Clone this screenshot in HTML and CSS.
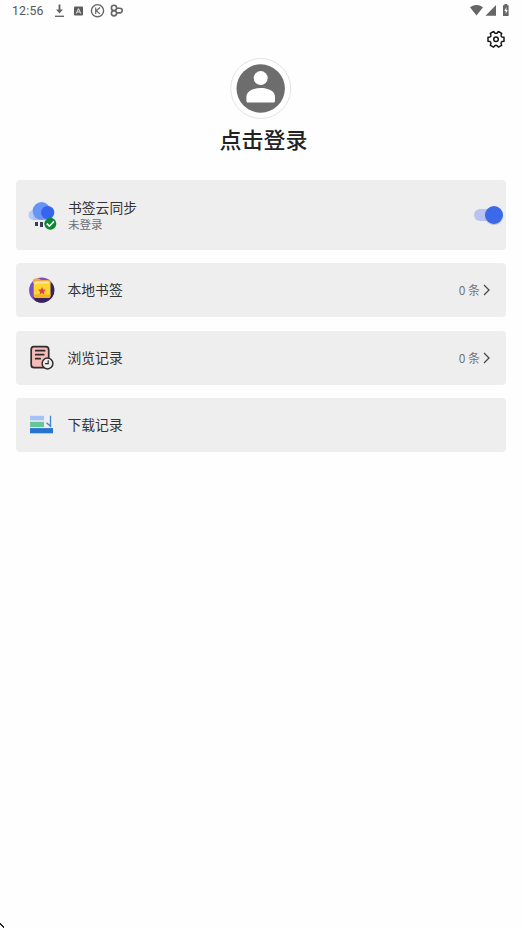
FILE: index.html
```html
<!DOCTYPE html>
<html lang="zh-CN">
<head>
<meta charset="utf-8">
<title>点击登录</title>
<link rel="stylesheet" href="styles.css">
</head>
<body>
<header class="status">
  <span class="clock">12:56</span>
  <svg class="left-icons" width="70" height="16" viewBox="54 3 70 16">
    <g fill="none" stroke="#666" stroke-width="1.4">
      <path d="M59.500 4.500v7" stroke-width="1.900"/><path d="M55 16.300h9"/>
      <circle cx="97.500" cy="10.700" r="6.100" stroke-width="1.400"/>
      <path d="M95.700 7.500v6.400M100 7.500l-3.700 3.200 3.700 3.200" stroke-width="1.200"/>
      <circle cx="114" cy="7.900" r="2.600" stroke-width="1.600"/><circle cx="114" cy="13.300" r="2.600" stroke-width="1.600"/>
      <path d="M116.500 8.300h3.400a2.300 2.300 0 0 1 0 4.600h-3.400" stroke-width="1.600"/>
    </g>
    <path d="M56 9.500h7l-3.500 4z" fill="#666"/>
    <rect x="74" y="6.500" width="9" height="9" rx="1" fill="#5c5c5c"/>
    <path d="M76.200 13.600l2.300-5 2.300 5M77.200 12h2.600" stroke="#eee" fill="none"/>
  </svg>
  <svg class="right-icons" width="42" height="16" viewBox="469 3 42 16">
    <g fill="#666"><path d="M470 7.200q6.500-4.400 13 0l-6.500 8.300zM485.500 15.700l10.500-10.700v10.700z"/>
    <path d="M503 5.300h1.400V4h2.800v1.300h1.400V16H503z"/></g>
    <path d="M506.500 7l-2.200 4h1.400v3l2-4h-1.400z" fill="#fff"/>
  </svg>
</header>
<div class="toolbar">
  <svg width="20" height="20" viewBox="-10 -10.300 20 20" fill="none" stroke="#161616" stroke-width="1.500" stroke-linejoin="round">
    <path d="M8-2V2Q3.600 1.900 5.700 6L2.400 7.800Q0 3.900-2.400 7.800L-5.700 6Q-3.600 1.900-8 2V-2Q-3.600-1.900-5.700-6L-2.400-7.800Q0-3.900 2.400-7.800L5.700-6Q3.600-1.900 8-2Z"/>
    <circle r="2.300"/>
  </svg>
</div>
<section class="profile">
  <svg width="62" height="62" viewBox="-30.700 -31.500 62 62">
    <circle r="30" fill="#fff" stroke="#e3e3e3"/>
    <circle r="24.200" fill="#6d6d6d"/>
    <circle cy="-10.400" r="7" fill="#fff"/>
    <path d="M-14.300 12.500V8.500C-14.300 2-6.500-.5 0-.5S14.300 2 14.300 8.500v4q0 1.500-1.500 1.500h-25.600q-1.500 0-1.500-1.500z" fill="#fff"/>
  </svg>
  <h1>点击登录</h1>
</section>
<main class="cards">
  <div class="card sync">
    <svg class="icon" width="30" height="30" viewBox="27 201 30 30">
      <circle cx="33.500" cy="215" r="5" fill="#b5cbfb"/><path d="M33 214h13v6H33z" fill="#a6c0fa"/>
      <circle cx="41.500" cy="211" r="8.900" fill="#6795f5"/>
      <circle cx="47.700" cy="212.500" r="6.600" fill="#3565ee"/>
      <path d="M35 222h3v4h-3zM40 222h3v5h-3z" fill="#3b3c59"/>
      <circle cx="50.300" cy="223.700" r="6" fill="#0a8931"/>
      <path d="M46.800 223.700l2.600 2.500 4.500-4.800" fill="none" stroke="#fff" stroke-width="1.600"/>
    </svg>
    <div class="text"><span class="label">书签云同步</span><span class="sub">未登录</span></div>
    <span class="switch"><i></i></span>
  </div>
  <div class="card">
    <svg class="icon" width="30" height="30" viewBox="26.500 275.100 30 30">
      <defs><clipPath id="disc"><circle cx="41.200" cy="290.300" r="12.600"/></clipPath></defs>
      <g clip-path="url(#disc)"><path d="M28 277h27v27H28z" fill="#7650c5"/>
      <path d="M33 297l17-15 6 5v18H36z" fill="#38225f"/></g>
      <path d="M32.500 283v-2q0-2.500 2.500-2.500h3.500l2 1.500h7q2.500 0 2.500 3z" fill="#f5a83d"/>
      <rect x="33.200" y="281" width="16.800" height="17" rx="2.500" fill="#ffd52e"/>
      <path d="M35 284.500q0-2 2-2h11" fill="none" stroke="#ffedb0" stroke-width="1.500"/>
      <path d="M33.500 294.500q0 3.500 3 3.500h10.500q3 0 3-3.500z" fill="#f4b223"/>
      <path d="M41.500 287l1.200 2.500 2.700.4-2 1.900.5 2.700-2.400-1.300-2.400 1.300.5-2.700-2-1.900 2.700-.4z" fill="#df4150"/>
    </svg>
    <span class="label">本地书签</span>
    <span class="count">0 条</span>
    <svg class="chevron" width="8" height="12" viewBox="0 0 8 12"><path d="M1 1l5 5-5 5"/></svg>
  </div>
  <div class="card">
    <svg class="icon" width="30" height="30" viewBox="26.800 342.800 30 30" fill="none" stroke="#302b2d" stroke-width="1.700" stroke-linecap="round">
      <path d="M33.500 346.500h12q3 0 3 3v18H34q-3 0-3-3v-15q0-3 2.500-3z" fill="#f6bcb8"/>
      <path d="M35.500 350.500h9M35.500 354.500h8M35.500 358.500h4.500"/>
      <circle cx="47.300" cy="363.300" r="5.400" fill="#eee" stroke-width="1.500"/>
      <path d="M48 360.500v3h-2.800" stroke-width="1.200"/>
    </svg>
    <span class="label">浏览记录</span>
    <span class="count">0 条</span>
    <svg class="chevron" width="8" height="12" viewBox="0 0 8 12"><path d="M1 1l5 5-5 5"/></svg>
  </div>
  <div class="card">
    <svg class="icon" width="30" height="30" viewBox="27 410.200 30 30">
      <path d="M30 416h14v4.500H30z" fill="#a5c2f8"/><path d="M30 422h14v5.300H30z" fill="#66c697"/>
      <path d="M30 428.300h23v5.200H30z" fill="#2774d0"/>
      <path d="M50.500 416v10.500l-4-3.500" fill="none" stroke="#4282cc" stroke-width="1.300"/>
    </svg>
    <span class="label">下载记录</span>
  </div>
</main>
<svg class="pointer" width="5" height="5" viewBox="0 0 5 5"><path d="M0 0h1v1h1v1h1v1h1v2H3V4H2V3H1V2H0z" fill="#222"/></svg>
</body>
</html>
```
FILE: styles.css
```css
* { box-sizing: border-box; }
body {
  margin: 0;
  height: 928px;
  overflow: hidden;
  display: flex;
  flex-direction: column;
  background: #fefefe;
  color: #333;
  font-family: "Noto Sans CJK SC", sans-serif;
}
svg { display: block; flex: none; }
.status { display: flex; align-items: center; height: 22px; padding: 0 11px 0 12px; }
.clock { width: 42px; margin-top: -1px; font: 400 12.3px Roboto, sans-serif; letter-spacing: .2px; color: #555; }
.right-icons { margin-left: auto; }
.toolbar { display: flex; justify-content: flex-end; padding: 7px 16.5px 0 0; height: 35px; }
.profile { display: flex; flex-direction: column; align-items: center; height: 123px; }
.profile svg { margin-right: 1px; }
h1 { margin: 3px 0 0 5px; font-size: 22px; line-height: 32px; font-weight: 500; color: #222; }
.cards { display: flex; flex-direction: column; gap: 13.4px; padding: 0 16px; }
.card { display: flex; align-items: center; height: 54px; padding: 0 15px 0 10.5px; border-radius: 4px; background: #eee; }
.sync { height: 70px; padding: 0 3px 0 11px; }
.sync .icon { margin-top: 2px; }
.label { margin: -1px 0 1px 11px; font-size: 13.8px; line-height: 20px; }
.text { display: flex; flex-direction: column; margin-left: 11px; margin-top: -1px; }
.text .label { margin: 0; }
.sub { margin-top: -1px; font-size: 11.5px; line-height: 16px; color: #707070; }
.count { margin-left: auto; font-size: 12px; line-height: 18px; color: #757575; }
.chevron { margin-left: 3px; }
.chevron path { fill: none; stroke: #484848; stroke-width: 1.3; }
.switch { display: flex; align-items: center; justify-content: flex-end; width: 29px; height: 12px; margin-left: auto; border-radius: 6px; background: linear-gradient(#b7c4f1, #b7c4f1) 0 0 / 22px 12px no-repeat; }
.switch i { width: 18px; height: 18px; border-radius: 50%; background: #3c69e9; box-shadow: 0 1px 1px #0003; }
.pointer { margin-top: auto; }
```
